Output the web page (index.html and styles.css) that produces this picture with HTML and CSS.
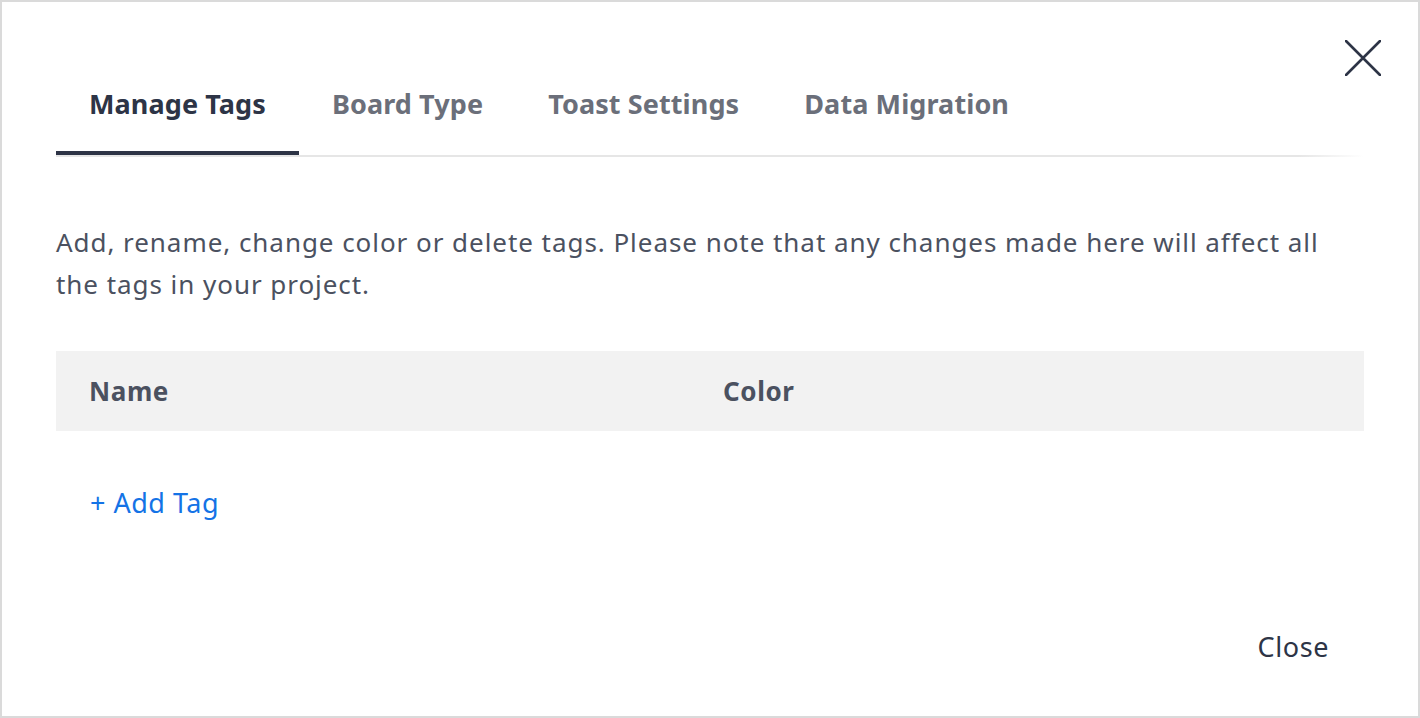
FILE: index.html
```html
<!DOCTYPE html>
<html lang="en">
<head>
<meta charset="utf-8">
<title>Manage Tags</title>
<link rel="stylesheet" href="styles.css">
</head>
<body>
<div class="dialog">
  <button class="close-x" aria-label="Close">
    <svg width="36" height="36" viewBox="0 0 36 36"><path d="M1 1 L35 35 M35 1 L1 35" stroke="#2d3446" stroke-width="2.6" stroke-linecap="round" fill="none"/></svg>
  </button>
  <nav class="tabs">
    <div class="tab active">Manage Tags</div>
    <div class="tab">Board Type</div>
    <div class="tab">Toast Settings</div>
    <div class="tab">Data Migration</div>
  </nav>
  <p class="desc">Add, rename, change color or delete tags. Please note that any changes made here will affect all the tags in your project.</p>
  <div class="table-head">
    <div class="col-name">Name</div>
    <div class="col-color">Color</div>
  </div>
  <div class="add-row"><a class="add-tag" href="#">+ Add Tag</a></div>
  <div class="footer"><button class="close-btn">Close</button></div>
</div>
</body>
</html>
```
FILE: styles.css
```css
* { box-sizing: border-box; }
html, body { margin: 0; padding: 0; background: #fff; }
body { font-family: "Noto Sans", "Open Sans", sans-serif; }
.dialog {
  position: relative;
  width: 1420px;
  height: 718px;
  border: 2px solid #dadada;
  padding: 0 54px;
  background: #fff;
}
.close-x {
  position: absolute;
  top: 37px;
  right: 36px;
  width: 38px;
  height: 38px;
  padding: 0;
  border: none;
  background: none;
  display: flex;
  align-items: center;
  justify-content: center;
  cursor: pointer;
}
.tabs {
  display: flex;
  margin-top: 80px;
  height: 73px;
  position: relative;
}
.tabs::after {
  content: "";
  position: absolute;
  left: 0;
  right: 0;
  bottom: -2px;
  height: 2px;
  background: linear-gradient(to right, #e6e6e6 0%, #e6e6e6 95%, rgba(230,230,230,0) 100%);
}
.tab {
  padding: 0 32px 0 33px;
  font-size: 27px;
  letter-spacing: 0.1px;
  font-weight: 700;
  color: #6b6f7a;
  line-height: 44px;
  border-bottom: 4px solid transparent;
  height: 73px;
  white-space: nowrap;
}
.tab.active {
  color: #2d3446;
  border-bottom-color: #2d3446;
  padding-right: 33px;
}
.desc {
  margin: 66px 0 0;
  padding-right: 20px;
  font-size: 26px;
  letter-spacing: 0.95px;
  line-height: 42px;
  color: #4b5160;
}
.table-head {
  margin-top: 46px;
  height: 80px;
  background: #f2f2f2;
  display: flex;
  align-items: center;
  font-size: 26px;
  letter-spacing: 0.6px;
  font-weight: 700;
  color: #4b5160;
}
.col-name { padding-left: 33px; width: 667px; }
.add-row {
  margin-top: 54px;
  padding-left: 34px;
  height: 36px;
  line-height: 36px;
}
.add-tag {
  font-size: 27px;
  letter-spacing: 0.5px;
  color: #1473e6;
  text-decoration: none;
}
.footer {
  display: flex;
  justify-content: flex-end;
  margin-top: 108px;
}
.close-btn {
  font-family: inherit;
  font-size: 27px;
  letter-spacing: 0.6px;
  line-height: 36px;
  color: #2d3446;
  background: none;
  border: none;
  padding: 0 35px 0 0;
  cursor: pointer;
}
```
